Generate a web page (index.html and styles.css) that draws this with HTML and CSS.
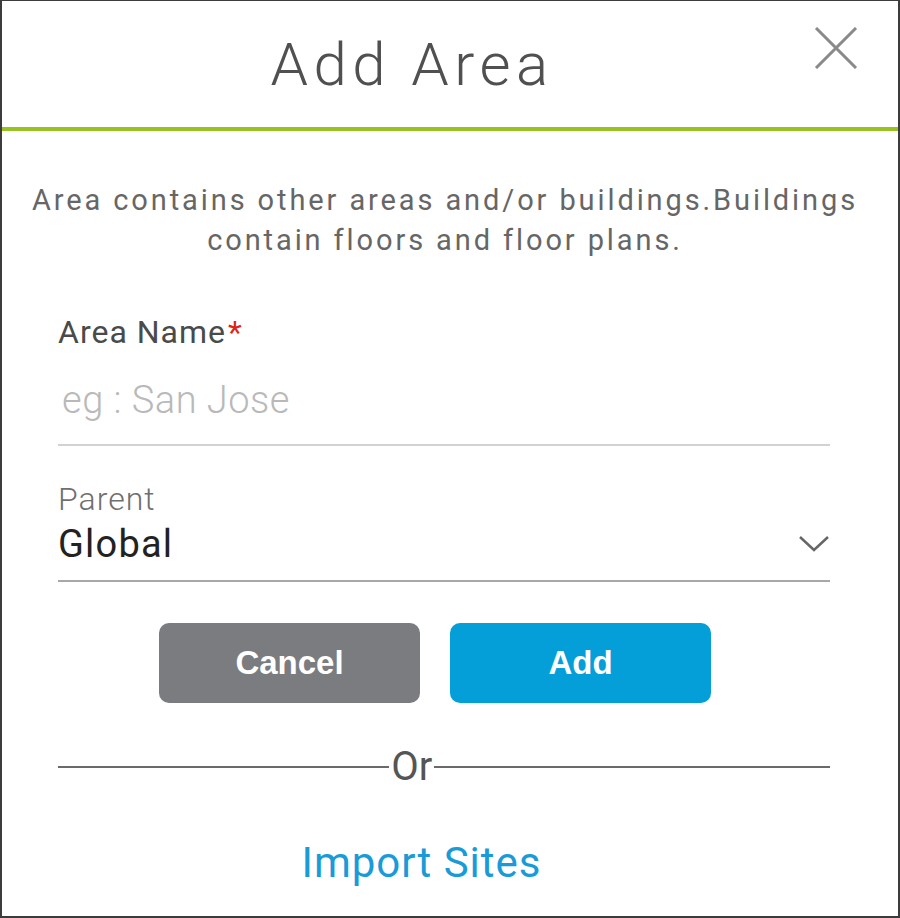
FILE: index.html
```html
<!DOCTYPE html>
<html lang="en">
  <head>
    <meta charset="UTF-8" />
    <meta name="viewport" content="width=device-width, initial-scale=1.0" />
    <title>Add Area</title>

    <link rel="stylesheet" href="styles.css">
  </head>
  <body>
    <div class="dialog">
      <!-- Cabeçalho com título e botão de fechar -->
      <div class="dialog-header">
        <h1 class="dialog-title">Add Area</h1>
        <button class="close-btn" aria-label="Close">
          <svg width="44" height="42" viewBox="0 0 44 42">
            <path d="M2 1 L42 41 M42 1 L2 41" stroke="#8a8a8a" stroke-width="3" fill="none" />
          </svg>
        </button>
      </div>

      <div class="dialog-body">
        <p class="intro">Area contains other areas and/or buildings.Buildings<br />contain floors and floor plans.</p>

        <!-- Campo nome da área -->
        <div class="field">
          <label class="field-label" for="area-name">Area Name<span class="required">*</span></label>
          <input id="area-name" class="text-input" placeholder="eg : San Jose" />
        </div>

        <!-- Campo pai -->
        <div class="field field-parent">
          <span class="field-label parent-label">Parent</span>
          <div class="select">
            <span class="select-value">Global</span>
            <svg width="32" height="18" viewBox="0 0 32 18">
              <path d="M2 2 L16 15 L30 2" stroke="#666" stroke-width="2.5" fill="none" />
            </svg>
          </div>
        </div>

        <div class="actions">
          <button class="btn btn-cancel">Cancel</button>
          <button class="btn btn-add">Add</button>
        </div>

        <div class="divider"><span>Or</span></div>

        <a class="import-link" href="#">Import Sites</a>
      </div>
    </div>
  </body>
</html>
```

FILE: styles.css
```css
/* Página inteira ocupada pelo diálogo */
body {
  margin: 0;
  background-color: #fff;
  font-family: Roboto, "Liberation Sans", Arial, sans-serif;
}

.dialog {
  box-sizing: border-box;
  width: 900px;
  height: 918px;
  border: 2px solid #3c3c3c;
  border-top-width: 1px;
  background-color: #fff;
}

/* Cabeçalho */
.dialog-header {
  position: relative;
  height: 126px;
  border-bottom: 4px solid #98c21f;
  display: flex;
  justify-content: center;
  align-items: center;
  padding-right: 76px;
}

.dialog-title {
  margin: 0;
  font-weight: 300;
  font-size: 60px;
  letter-spacing: 5.5px;
  color: #505050;
}

.close-btn {
  position: absolute;
  top: 26px;
  right: 40px;
  padding: 0;
  border: none;
  background: none;
  cursor: pointer;
}

/* Corpo */
.dialog-body {
  padding: 0 68px 0 56px;
  display: flex;
  flex-direction: column;
}

.intro {
  margin: 49px -58px 0 -56px;
  text-align: center;
  font-size: 29px;
  line-height: 40px;
  letter-spacing: 2.9px;
  color: #666;
}

.field {
  display: flex;
  flex-direction: column;
  margin-top: 53px;
}

.field-label {
  font-size: 32px;
  line-height: 38px;
  letter-spacing: 1px;
  color: #4a4a4a;
}

.required {
  color: #e2231a;
  margin-left: 2px;
}

.text-input {
  height: 45px;
  margin-top: 20px;
  padding: 6px 4px 22px 4px;
  border: none;
  border-bottom: 2px solid #d2d2d2;
  font-family: inherit;
  font-size: 38px;
  font-weight: 300;
  letter-spacing: 0.5px;
  color: #333;
  outline: none;
}

.text-input::placeholder {
  color: #b9b9b9;
}

.field-parent {
  margin-top: 34px;
}

.parent-label {
  font-weight: 300;
  color: #6f6f6f;
}

.select {
  display: flex;
  justify-content: space-between;
  align-items: center;
  padding: 4px 0 14px 0;
  border-bottom: 2px solid #a8a8a8;
}

.select-value {
  font-size: 38px;
  line-height: 44px;
  letter-spacing: 1.2px;
  color: #222;
}

/* Botões */
.actions {
  display: flex;
  justify-content: center;
  gap: 30px;
  margin-top: 41px;
  padding-right: 18px;
}

.btn {
  width: 261px;
  height: 80px;
  border: none;
  border-radius: 10px;
  font-family: "Liberation Sans", Arial, sans-serif;
  font-size: 33px;
  font-weight: bold;
  color: #fff;
  cursor: pointer;
}

.btn-cancel {
  background-color: #7b7c80;
}

.btn-add {
  background-color: #049fd9;
}

/* Separador "Or" */
.divider {
  display: flex;
  align-items: center;
  gap: 2px;
  margin-top: 41px;
  font-size: 40px;
  line-height: 46px;
  color: #555;
}

.divider::before,
.divider::after {
  content: "";
  height: 2px;
  background-color: #6a6a6a;
}

.divider::before {
  flex: 328;
}

.divider::after {
  flex: 392;
}

.import-link {
  align-self: center;
  margin-top: 48px;
  margin-right: 45px;
  font-size: 42px;
  line-height: 50px;
  letter-spacing: 1px;
  color: #1a9bd7;
  text-decoration: none;
}
```
